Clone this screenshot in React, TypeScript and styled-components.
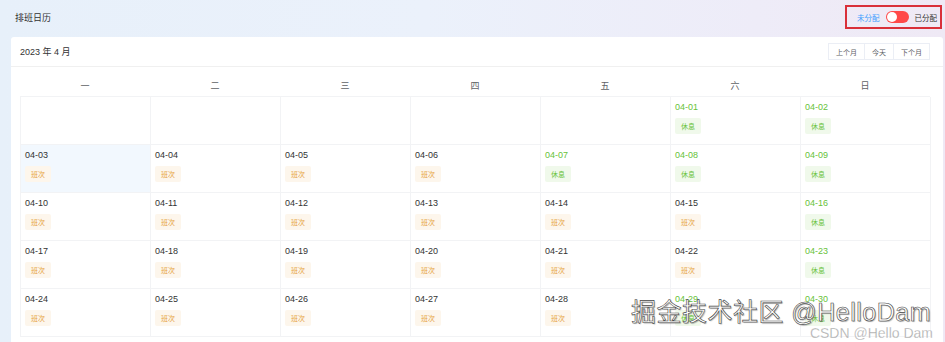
import styled, { createGlobalStyle } from "styled-components";

const GlobalStyle = createGlobalStyle`
  html, body {
    margin: 0;
    padding: 0;
  }
  body {
    font-family: "Liberation Sans", "Noto Sans CJK SC", sans-serif;
    color: #333;
  }
`;

const Page = styled.div`
  height: 342px;
  overflow: hidden;
  background: linear-gradient(90deg, #e7f0fa 0%, #ebf1fb 45%, #eeecf8 80%, #efe9f5 100%);
`;

const TopBar = styled.div`
  height: 34px;
  display: flex;
  align-items: center;
  justify-content: space-between;
  padding: 0 3px 0 15px;
`;

const PageTitle = styled.h3`
  margin: 0;
  font-size: 9px;
  font-weight: normal;
  color: #333;
`;

const ToggleBox = styled.div`
  display: flex;
  align-items: center;
  gap: 6px;
  height: 20px;
  padding: 0 3px 0 10px;
  border: 2px solid #d9303a;
`;

const ToggleLabel = styled.span<{ active?: boolean }>`
  font-size: 7.5px;
  color: ${(props) => (props.active ? "#409eff" : "#333")};
`;

const Switch = styled.div`
  position: relative;
  width: 23px;
  height: 12px;
  border-radius: 6px;
  background-color: #ff4949;
`;

const Knob = styled.span`
  position: absolute;
  top: 1px;
  left: 1px;
  width: 10px;
  height: 10px;
  border-radius: 50%;
  background-color: #fff;
`;

const Card = styled.div`
  margin: 3px 2px 0 11px;
  background-color: #fff;
  border-radius: 3px 3px 0 0;
`;

const CardHeader = styled.div`
  height: 29px;
  display: flex;
  align-items: center;
  justify-content: space-between;
  padding: 0 13px 0 9px;
  border-bottom: 1px solid #f0f0f0;
`;

const MonthTitle = styled.div`
  font-size: 9px;
  color: #333;
`;

const ButtonGroup = styled.div`
  display: flex;
`;

const NavButton = styled.button`
  height: 17px;
  padding: 0 7px;
  border: 1px solid #ebeef5;
  background-color: #fff;
  font-family: inherit;
  font-size: 7px;
  color: #606266;
  cursor: pointer;
  & + & {
    margin-left: -1px;
  }
`;

const CardBody = styled.div`
  padding: 0 13px 40px 9px;
`;

const WeekRow = styled.div`
  display: grid;
  grid-template-columns: repeat(7, 130px);
  height: 29px;
  align-items: center;
`;

const WeekLabel = styled.div`
  text-align: center;
  font-size: 9px;
  color: #606266;
  padding-top: 8px;
`;

const DayGrid = styled.div`
  display: grid;
  grid-template-columns: repeat(7, 130px);
  grid-auto-rows: 48px;
  border-top: 1px solid #f2f3f5;
  border-left: 1px solid #f2f3f5;
`;

const Cell = styled.div<{ selected?: boolean }>`
  padding: 4px 4px;
  border-right: 1px solid #f2f3f5;
  border-bottom: 1px solid #f2f3f5;
  background-color: ${(props) => (props.selected ? "#f2f8fe" : "#fff")};
`;

const DateText = styled.div<{ rest?: boolean }>`
  font-size: 9px;
  line-height: 12px;
  color: ${(props) => (props.rest ? "#67c23a" : "#333")};
`;

const Badge = styled.span<{ rest?: boolean }>`
  display: inline-flex;
  align-items: center;
  justify-content: center;
  margin-top: 5px;
  width: 26px;
  height: 16px;
  border-radius: 2px;
  font-size: 7px;
  color: ${(props) => (props.rest ? "#67c23a" : "#e6a23c")};
  background-color: ${(props) => (props.rest ? "#f0f9eb" : "#fdf6ec")};
`;

const Stage = styled.div`
  position: relative;
`;

const Watermark = styled.div`
  position: absolute;
  right: 14px;
  bottom: 2px;
  text-align: right;
  pointer-events: none;
`;

const WatermarkMain = styled.div`
  font-size: 25px;
  line-height: 28px;
  color: #fff;
  -webkit-text-stroke: 0.6px #444;
  text-shadow: 1px 1px 1px rgba(0, 0, 0, 0.3);
  letter-spacing: 0.5px;
`;

const WatermarkSub = styled.div`
  font-size: 14px;
  line-height: 14px;
  color: rgba(130, 130, 130, 0.7);
  -webkit-text-stroke: 0.3px rgba(255, 255, 255, 0.9);
  margin-right: -2px;
`;

const weekdays = ["一", "二", "三", "四", "五", "六", "日"];
const restDays = [1, 2, 7, 8, 9, 16, 23, 29, 30];
const pad = (n: number) => (n < 10 ? `0${n}` : `${n}`);

function App() {
  // April 2023 starts on a Saturday, so 5 blank cells first
  const cells: (number | null)[] = [null, null, null, null, null];
  for (let d = 1; d <= 30; d++) cells.push(d);

  return (
    <>
      <GlobalStyle />
      <Stage>
        <Page>
          <TopBar>
            <PageTitle>排班日历</PageTitle>
            <ToggleBox>
              <ToggleLabel active>未分配</ToggleLabel>
              <Switch>
                <Knob />
              </Switch>
              <ToggleLabel>已分配</ToggleLabel>
            </ToggleBox>
          </TopBar>
          <Card>
            <CardHeader>
              <MonthTitle>2023 年 4 月</MonthTitle>
              <ButtonGroup>
                <NavButton>上个月</NavButton>
                <NavButton>今天</NavButton>
                <NavButton>下个月</NavButton>
              </ButtonGroup>
            </CardHeader>
            <CardBody>
              <WeekRow>
                {weekdays.map((w) => (
                  <WeekLabel key={w}>{w}</WeekLabel>
                ))}
              </WeekRow>
              <DayGrid>
                {cells.map((d, i) => {
                  if (d === null) return <Cell key={`e${i}`} />;
                  const rest = restDays.includes(d);
                  return (
                    <Cell key={d} selected={d === 3}>
                      <DateText rest={rest}>04-{pad(d)}</DateText>
                      <Badge rest={rest}>{rest ? "休息" : "班次"}</Badge>
                    </Cell>
                  );
                })}
              </DayGrid>
            </CardBody>
          </Card>
        </Page>
        <Watermark>
          <WatermarkMain>掘金技术社区 @HelloDam</WatermarkMain>
          <WatermarkSub>CSDN @Hello Dam</WatermarkSub>
        </Watermark>
      </Stage>
    </>
  );
}

export default App;
